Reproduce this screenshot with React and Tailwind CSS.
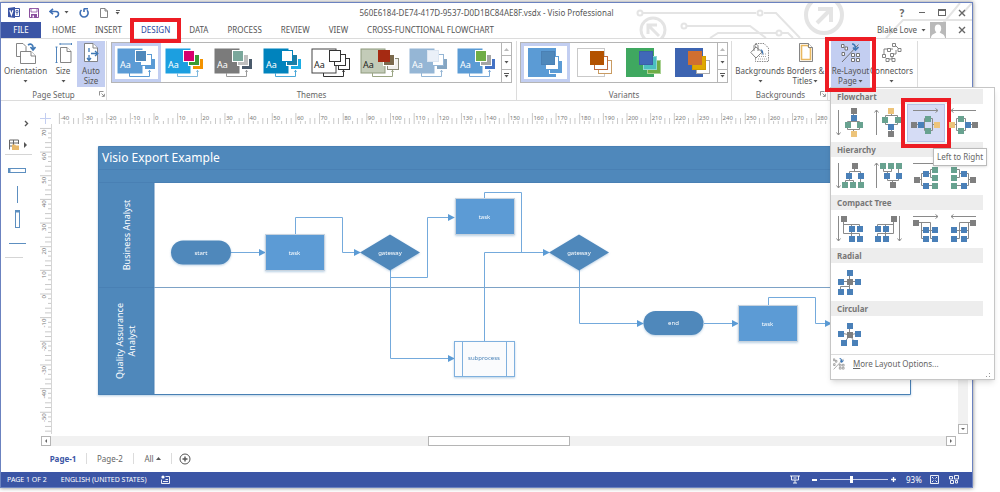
import { useState } from 'react';

const TABS = ['HOME', 'INSERT', 'DESIGN', 'DATA', 'PROCESS', 'REVIEW', 'VIEW', 'CROSS-FUNCTIONAL FLOWCHART'];

const THEMES = [
  { name: 'Office', main: '#5b9bd5', text: '#fff', line: '#5b9bd5', cards: ['#4f88bb', '#ffffff', '#5b9bd5'], edges: ['#fff', '#5b9bd5', '#fff'] },
  { name: 'Integral', main: '#1c9fe0', text: '#fff', line: '#7fb9de', cards: ['#d6006d', '#3a9b35', '#f39200'], edges: ['#fff', '#fff', '#fff'] },
  { name: 'Slate', main: '#7b7b7b', text: '#fff', line: '#9a9a9a', cards: ['#7aa79b', '#bfbfbf', '#4a5a6b'], edges: ['#fff', '#fff', '#fff'] },
  { name: 'Ion', main: '#0083bd', text: '#fff', line: '#4aa8d8', cards: ['#ffffff', '#1b7ea6', '#1cade4'], edges: ['#0083bd', '#fff', '#fff'] },
  { name: 'Outline', main: '#ffffff', text: '#222', line: '#333', stroke: '#444', cards: ['#ffffff', '#ffffff', '#ffffff'], edges: ['#333', '#333', '#333'] },
  { name: 'Retrospect', main: '#c3cbb8', text: '#222', line: '#9aa583', stroke: '#8e9a7c', cards: ['#a52a12', '#7b6a4d', '#f2f2ee'], edges: ['#a52a12', '#fff', '#8a8a78'] },
  { name: 'Pale', main: '#95b6d5', text: '#fff', line: '#95b6d5', cards: ['#eaf0f8', '#ffffff', '#86a6c2'], edges: ['#dbe5f1', '#95b6d5', '#fff'] },
  { name: 'Facet', main: '#5b9bd5', text: '#fff', line: '#7aa9d8', cards: ['#70ad47', '#a5a5a5', '#4472c4'], edges: ['#fff', '#fff', '#fff'] },
];

const VARIANTS = [
  { name: 'Variant 1', main: '#5b9bd5', cards: ['#4f88bb', '#ffffff', '#5b9bd5'], edges: ['#4a80b4', '#5b9bd5', '#fff'] },
  { name: 'Variant 2', main: '#ffffff', stroke: '#c9c9c9', cards: ['#b35200', '#ffffff', '#ffffff'], edges: ['#b35200', '#bd6b40', '#c99b62'] },
  { name: 'Variant 3', main: '#3fa860', cards: ['#4068b8', '#4bbfbf', '#70ad47'], edges: ['#3a5fa8', '#8fd6d0', '#a9d193'] },
  { name: 'Variant 4', main: '#3d64b1', cards: ['#d06f30', '#e0a800', '#ffffff'], edges: ['#d06f30', '#d09c00', '#aaa'] },
];

const GRAY = '#7f7f7f';
const BLUE = '#4a80b8';
const GREEN = '#68a290';
const YELLOW = '#edc47a';

// Each layout: connector path, arrow direction and [x, y, color] boxes
const SECTIONS = [
  {
    title: 'Flowchart',
    items: [
      { label: 'Top to Bottom', arrow: 'down', line: 'M22.5 7V18M16.5 21V17.5H28.5V21M16.5 21V25.5H28.5V21M22.5 26V30', boxes: [[23, 7, GRAY], [23, 14, BLUE], [17, 21, GREEN], [29, 21, GREEN], [23, 30, YELLOW]] },
      { label: 'Bottom to Top', arrow: 'up', line: 'M22.5 7V11.5M16.5 16V11.5H28.5V16M16.5 16V20.5H28.5V16M22.5 20V30', boxes: [[22, 7, YELLOW], [16, 16, GREEN], [29, 16, GREEN], [22, 23, BLUE], [22, 30, GRAY]] },
      { label: 'Left to Right', arrow: 'right', line: 'M7 20.5H14M21 14.5H17.5V26.5H21M21 14.5H25.5V26.5H21M26 20.5H30', boxes: [[7, 21, GRAY], [14, 21, BLUE], [21, 15, GREEN], [21, 27, GREEN], [30, 21, YELLOW]] },
      { label: 'Right to Left', arrow: 'left', line: 'M7 20.5H11M16 14.5H11.5V26.5H16M16 14.5H20.5V26.5H16M20 20.5H30', boxes: [[7, 21, YELLOW], [16, 15, GREEN], [16, 27, GREEN], [23, 21, BLUE], [30, 21, GRAY]] },
    ],
  },
  {
    title: 'Hierarchy',
    items: [
      { label: 'Hierarchy Top to Bottom', arrow: 'down', line: 'M23.5 9V14M18.5 19V14.5H29.5V28M18.5 19V24M14.5 28V23.5H22.5V28', boxes: [[24, 9, GRAY], [18, 19, BLUE], [30, 19, BLUE], [14, 28, GREEN], [22, 28, GREEN], [30, 28, GREEN]] },
      { label: 'Hierarchy Bottom to Top', arrow: 'up', line: 'M14.5 9V14.5H22.5V9M18.5 14V19M29.5 9V19M18.5 19V23.5H29.5V19M23.5 23V28', boxes: [[14, 9, GREEN], [22, 9, GREEN], [30, 9, GREEN], [18, 19, BLUE], [30, 19, BLUE], [24, 28, GRAY]] },
      { label: 'Hierarchy Left to Right', arrow: 'right', line: 'M10 22.5H14M19 16.5H14.5V28.5H28M19 16.5H24M28 12.5H23.5V20.5H28', boxes: [[10, 23, GRAY], [19, 17, BLUE], [19, 29, BLUE], [28, 13, GREEN], [28, 21, GREEN], [28, 29, GREEN]] },
      { label: 'Hierarchy Right to Left', arrow: 'left', line: 'M28 22.5H24M19 16.5H23.5V28.5H9M19 16.5H14M9 12.5H14.5V20.5H9', boxes: [[28, 23, GRAY], [19, 17, BLUE], [19, 29, BLUE], [9, 13, GREEN], [9, 21, GREEN], [9, 29, GREEN]] },
    ],
  },
  {
    title: 'Compact Tree',
    items: [
      { label: 'Down then Right', arrow: 'down', line: 'M12.5 9V23.5H28.5V29M12.5 14.5H28.5V19M20.5 14V29', boxes: [[13, 9, GRAY], [21, 19, BLUE], [29, 19, BLUE], [21, 29, BLUE], [29, 29, BLUE]] },
      { label: 'Down then Left', arrow: 'downRight', line: 'M24.5 9V23.5H8.5V29M24.5 14.5H8.5V19M16.5 14V29', boxes: [[25, 9, GRAY], [9, 19, BLUE], [17, 19, BLUE], [9, 29, BLUE], [17, 29, BLUE]] },
      { label: 'Right then Down', arrow: 'right', line: 'M9 12.5H23.5V28.5H28M14.5 13V28.5H19M14 20.5H28', boxes: [[9, 13, GRAY], [19, 20, BLUE], [28, 20, BLUE], [19, 29, BLUE], [28, 29, BLUE]] },
      { label: 'Left then Down', arrow: 'left', line: 'M28 12.5H14.5V28.5H9M23.5 13V28.5H19M23 20.5H9', boxes: [[28, 13, GRAY], [9, 20, BLUE], [19, 20, BLUE], [9, 29, BLUE], [19, 29, BLUE]] },
    ],
  },
  {
    title: 'Radial',
    items: [
      { label: 'Radial', line: 'M18.5 10V24M10 18.5H27M9.5 29V23.5H18.5V29', boxes: [[19, 10, BLUE], [10, 19, BLUE], [27, 19, BLUE], [10, 29, BLUE], [19, 29, BLUE], [19, 19, GRAY]] },
    ],
  },
  {
    title: 'Circular',
    items: [
      { label: 'Circular', line: 'M18.5 10V19M19 19L10 17M19 19L27 17M19 19L13 27M19 19L24 27', boxes: [[19, 10, BLUE], [10, 18, BLUE], [27, 18, BLUE], [13, 27, BLUE], [24, 27, BLUE], [19, 19, GRAY]] },
    ],
  },
];

const ARROWS = {
  down: 'M7.5 6V31M5.5 28.5L7.5 31L9.5 28.5',
  up: 'M7.5 31V6M5.5 8.5L7.5 6L9.5 8.5',
  right: 'M6 6.5H31M28.5 4.5L31 6.5L28.5 8.5',
  left: 'M31 6.5H6M8.5 4.5L6 6.5L8.5 8.5',
  downRight: 'M30.5 6V31M28.5 28.5L30.5 31L32.5 28.5',
};

const Caret = ({ up = false }) => (
  <svg width="5" height="3" viewBox="0 0 5 3" className="inline-block shrink-0" aria-hidden="true">
    <path d={up ? 'M0 3L2.5 0L5 3Z' : 'M0.5 0H4.5L2.5 2.5Z'} fill="#555" />
  </svg>
);

const Launcher = () => (
  <button type="button" aria-label="Open dialog" className="absolute right-0 top-1">
    <svg width="6" height="6" viewBox="0 0 6 6" fill="none" stroke="#777" strokeWidth="0.8">
      <path d="M0.5 4.5V0.5H4.5M2.5 2.5L5 5M5.4 2.8V5.4H2.8" />
    </svg>
  </button>
);

const ThemeThumb = ({ theme }) => (
  <svg width="41" height="32" viewBox="-1 -1 41 32" aria-hidden="true">
    <rect x="1" y="1" width="24" height="24" fill={theme.main} stroke={theme.stroke || theme.main} />
    <text x="3" y="20" fontSize="9" fill={theme.text}>Aa</text>
    <path d="M12.5 25V28.5H32.5V22" fill="none" stroke={theme.line} />
    <path d="M31 24L32.5 21.5L34 24Z" fill={theme.line} />
    <rect x="27.5" y="10.5" width="11" height="11" fill={theme.cards[2]} stroke={theme.edges[2]} />
    <rect x="23.5" y="6.5" width="11" height="11" fill={theme.cards[1]} stroke={theme.edges[1]} />
    <rect x="18.5" y="2.5" width="11" height="11" fill={theme.cards[0]} stroke={theme.edges[0]} />
  </svg>
);

const VariantThumb = ({ theme }) => (
  <svg width="38" height="32" viewBox="0 0 38 32" aria-hidden="true">
    <rect x="1.5" y="1.5" width="27" height="28" fill={theme.main} stroke={theme.stroke || theme.main} />
    <rect x="22.5" y="13.5" width="13" height="13" fill={theme.cards[2]} stroke={theme.edges[2]} />
    <rect x="18.5" y="9.5" width="13" height="13" fill={theme.cards[1]} stroke={theme.edges[1]} />
    <rect x="14.5" y="4.5" width="13" height="13" fill={theme.cards[0]} stroke={theme.edges[0]} />
  </svg>
);

const Gallery = ({ items, Thumb, className }) => {
  const [active, setActive] = useState(0);

  return (
    <div className={`mt-px flex h-[41px] border border-[#b5b5b5] bg-white ${className}`}>
      {items.map((item, i) => (
        <button
          key={item.name}
          type="button"
          aria-label={item.name}
          onClick={() => setActive(i)}
          className={`flex min-w-0 flex-1 items-center justify-center border-[3px] ${i === active ? 'border-[#c2cef1]' : 'border-transparent'}`}
        >
          <Thumb theme={item} />
        </button>
      ))}
      <div className="flex w-[10px] flex-col border-l border-[#b5b5b5]">
        <button type="button" aria-label="Row up" className="flex flex-1 items-center justify-center opacity-40"><Caret up /></button>
        <button type="button" aria-label="Row down" className="flex flex-1 items-center justify-center border-y border-[#b5b5b5]"><Caret /></button>
        <button type="button" aria-label="More" className="flex flex-1 flex-col items-center justify-center gap-px">
          <span className="h-px w-[5px] bg-[#555]" />
          <Caret />
        </button>
      </div>
    </div>
  );
};

const Group = ({ label, launcher = false, className, children }) => (
  <section className={`flex shrink-0 flex-col border-r border-[#dcdcdc] ${className}`}>
    <div className="flex h-[46px] shrink-0">{children}</div>
    <div className="relative flex flex-1 items-center justify-center pt-[2px] text-[#666]">
      {label}
      {launcher && <Launcher />}
    </div>
  </section>
);

const BigButton = ({ icon, lines, caret = 'below', active = false, className, ...props }) => (
  <button
    type="button"
    className={`flex h-[46px] flex-col items-center whitespace-nowrap ${active ? 'bg-[#c3cef1]' : ''} ${className}`}
    {...props}
  >
    <span className="flex h-6 items-start justify-center pt-[2px]">{icon}</span>
    <span className="leading-[11px]">{lines[0]}</span>
    <span className="flex h-[10px] items-center justify-center gap-px leading-[10px]">
      {lines[1]}
      {caret !== 'none' && <Caret />}
    </span>
  </button>
);

const OrientationIcon = () => (
  <svg width="20" height="21" viewBox="0 0 20 21" fill="#fff" stroke="#777" strokeWidth="0.9">
    <path d="M0.5 0.5H7L10 3.5V13.5H0.5Z" />
    <path d="M4.5 8.5H15L19.5 13V20.5H4.5Z" />
    <path d="M15 8.5V13H19.5" />
    <path d="M12 2C15 0 17.5 2 17 5.5M14.5 4L17 7L19.5 4" fill="none" stroke="#3f78b5" strokeWidth="1.6" />
  </svg>
);

const SizeIcon = () => (
  <svg width="17" height="20" viewBox="0 0 17 20" fill="#fff" stroke="#777" strokeWidth="0.9">
    <path d="M5.5 4.5H12L16 8.5V19.5H5.5Z" />
    <path d="M12 4.5V8.5H16" />
    <path d="M5 1H16.5M5 0V2M16.5 0V2M1.5 4V19.5M0.5 4H2.5M0.5 19.5H2.5" stroke="#3f78b5" />
  </svg>
);

const AutoSizeIcon = () => (
  <svg width="15" height="20" viewBox="0 0 15 20" fill="#fff" stroke="#777" strokeWidth="0.9">
    <path d="M0.5 0.5H9L13.5 5V18.5H0.5Z" />
    <path d="M9 0.5V5H13.5" />
    <path d="M5 5V9M5 12V17M3 15L5 17.5L7 15M7 10.5H13M11 8L13.8 10.5L11 13" fill="none" stroke="#3f78b5" strokeWidth="1.3" />
  </svg>
);

const BackgroundsIcon = () => (
  <svg width="20" height="20" viewBox="0 0 20 20" fill="#fff" stroke="#777" strokeWidth="0.9">
    <path d="M5.5 0.5H14L18.5 5V18.5H5.5Z" strokeDasharray="1.4 1" />
    <path d="M8 16H17M9 13.5H17M11 11H17" stroke="#999" strokeDasharray="1 1" />
    <path d="M6 4L12 9L6 15L0.8 9.5Z" />
    <path d="M4 8V3C4 1 8 1 8 3V8" fill="none" />
    <path d="M10.5 6C13.5 7 13.5 9.5 13 12.5L11.5 8.5Z" fill="#3f78b5" stroke="none" />
  </svg>
);

const BordersIcon = () => (
  <svg width="14" height="20" viewBox="0 0 14 20" fill="#fff" stroke="#777" strokeWidth="0.9">
    <path d="M0.5 0.5H9.5L13.5 4.5V18.5H0.5Z" />
    <path d="M2.5 2.5H8.5L11.5 5.5V16.5H2.5Z" stroke="#e9b85f" strokeWidth="1.6" />
    <path d="M9.5 0.5V4.5H13.5" />
  </svg>
);

const RelayoutIcon = ({ className = 'h-5 w-5' }) => (
  <svg viewBox="0 0 20 20" className={className} fill="#fff" stroke="#666" strokeWidth="0.9">
    <path d="M0.5 1.5H3V4.5H0.5ZM4 4H6.5V7H4ZM1 9.5H3.5V12.5H1Z" />
    <path d="M1 19L17.5 1.5" fill="none" />
    <path d="M10.5 10.5H13.5V13.5H10.5ZM15.5 10.5H18.5V13.5H15.5ZM10.5 15.5H13.5V18.5H10.5ZM15.5 15.5H18.5V18.5H15.5Z" />
    <path d="M11 1C14 1 14.5 3.5 14.5 6M12 4.5L14.5 7L17.5 4" fill="none" stroke="#3f78b5" strokeWidth="1.7" />
  </svg>
);

const ConnectorsIcon = () => (
  <svg width="20" height="20" viewBox="0 0 20 20" fill="#fff" stroke="#777" strokeWidth="0.9">
    <path d="M2 12V6H11M13 2L17 6M9 11H14V7M5 16H10V13" fill="none" />
    <path d="M10.5 0.5H13.5V3.5H10.5ZM5.5 5.5H8.5V8.5H5.5ZM16 5.5H19V8.5H16ZM0.5 11.5H3.5V14.5H0.5ZM8.5 10.5H11.5V13.5H8.5ZM4 15.5H7V18.5H4ZM10 15.5H13V18.5H10Z" />
  </svg>
);

const LayoutIcon = ({ item }) => (
  <svg width="38" height="38" viewBox="0 0 38 38" aria-hidden="true">
    <g fill="none" stroke="#8a8a8a" strokeWidth="1">
      {item.arrow && <path d={ARROWS[item.arrow]} />}
      <path d={item.line} />
    </g>
    {item.boxes.map(([x, y, color]) => (
      <rect key={`${x}-${y}`} x={x - 3} y={y - 3} width="6" height="6" fill={color} />
    ))}
  </svg>
);

const LayoutMenu = () => (
  <div className="absolute -left-px top-[46px] z-20 w-[165px] border border-[#c6c6c6] bg-white pt-px text-left shadow-md">
    {SECTIONS.map((section) => (
      <div key={section.title} className="w-[152px]">
        <h3 className="h-[15px] bg-[#ededed] pl-[6px] font-bold leading-[15px] text-[#777]">{section.title}</h3>
        <div className="flex">
          {section.items.map((item) => {
            const hovered = item.label === 'Left to Right';
            return (
              <div key={item.label} className="relative">
                <button
                  type="button"
                  aria-label={item.label}
                  className={`block ${hovered ? 'bg-[#d5dcf5] outline outline-[#b5c2e8] -outline-offset-1' : ''}`}
                >
                  <LayoutIcon item={item} />
                </button>
                {hovered && (
                  <>
                    <span className="pointer-events-none absolute -inset-[6px] border-4 border-[#ed1c24]" />
                    <span className="absolute left-[26px] top-[44px] z-10 whitespace-nowrap border border-[#bbb] bg-white px-[3px] leading-4 text-[#666] shadow-sm">
                      Left to Right
                    </span>
                  </>
                )}
              </div>
            );
          })}
        </div>
      </div>
    ))}
    <div className="relative border-t border-[#dcdcdc] pb-[7px]">
      <button type="button" className="flex h-[17px] items-center gap-2 pl-[2px] text-[#666]">
        <RelayoutIcon className="h-3 w-3" />
        <span><u>M</u>ore Layout Options...</span>
      </button>
      <svg width="5" height="5" viewBox="0 0 5 5" className="absolute bottom-px right-[3px]" fill="#999">
        <path d="M3 0H4V1H3ZM3 3H4V4H3ZM0 3H1V4H0Z" />
      </svg>
    </div>
  </div>
);

const Circuit = () => (
  <svg className="pointer-events-none absolute right-0 top-0 h-[35px] w-[340px]" viewBox="632 3 340 35" fill="none" stroke="#e4e4e4" strokeWidth="2">
    <circle cx="640" cy="13" r="2.5" />
    <path d="M643 13H756M764 13H776L800 38" />
    <circle cx="760" cy="13" r="2.5" />
    <circle cx="653" cy="30" r="12" strokeWidth="3" />
    <path d="M659 36L648 25M648 34V25H657" strokeWidth="3" />
    <circle cx="684" cy="26" r="2.5" />
    <path d="M687 26H750L766 38M710 38L718 33H776" />
    <circle cx="779" cy="33" r="2.5" />
    <path d="M782 33H788L793 38" />
    <circle cx="824" cy="15" r="18" strokeWidth="4" />
    <path d="M817 23L831 9M818 9H831V22" strokeWidth="4" />
    <path d="M886 38L903 20H972M940 27L960 3M962 14L972 3" />
  </svg>
);

const TitleBar = () => (
  <div className="relative flex h-[19px] items-center justify-between pl-[7px] pr-[6px]">
    <div className="flex items-center text-[#666]">
      <svg width="12" height="11" viewBox="0 0 12 11" className="mr-[9px]" role="img" aria-label="Visio">
        <path d="M6 1.5H11.5V9.5H6" fill="#fff" stroke="#3b55a5" />
        <path d="M8 3.5H10V5.5H8ZM8 7H10" fill="none" stroke="#3b55a5" strokeWidth="0.8" />
        <path d="M0 1L7 0V11L0 10Z" fill="#3b55a5" />
        <path d="M1.8 3.2L3.4 7.8L5 3.2" fill="none" stroke="#fff" strokeWidth="1.2" />
      </svg>
      <button type="button" aria-label="Save" className="mr-[10px]">
        <svg width="10" height="10" viewBox="0 0 10 10">
          <path d="M0.5 0.5H9.5V9.5H0.5Z" fill="#fff" stroke="#8a4f9e" />
          <path d="M2 0.5H8V4H2Z" fill="#fff" stroke="#8a4f9e" strokeWidth="0.8" />
          <path d="M2 6H8V10H2Z" fill="#8a4f9e" />
          <path d="M3.5 7.5H5V9.5H3.5Z" fill="#fff" />
        </svg>
      </button>
      <button type="button" aria-label="Undo" className="mr-1">
        <svg width="11" height="10" viewBox="0 0 11 10" fill="none" stroke="#3f6fb5" strokeWidth="1.6">
          <path d="M4 0.8L1 3.5L4 6.2M1 3.5H7C10.5 3.5 10.5 9 6 9" />
        </svg>
      </button>
      <span className="mr-[10px] flex"><Caret /></span>
      <button type="button" aria-label="Redo" className="mr-[11px]">
        <svg width="10" height="10" viewBox="0 0 10 10" fill="none" stroke="#3f6fb5" strokeWidth="1.6">
          <path d="M2.5 2A4 4 0 1 0 8 2.2M5 0.5V4M5 0.8H9" />
        </svg>
      </button>
      <button type="button" aria-label="New" className="mr-[11px]">
        <svg width="8" height="10" viewBox="0 0 8 10" fill="#fff" stroke="#777" strokeWidth="0.9">
          <path d="M0.5 0.5H5L7.5 3V9.5H0.5ZM5 0.5V3H7.5" />
        </svg>
      </button>
      <button type="button" aria-label="Customize" className="-ml-[4px] flex flex-col items-center gap-px">
        <span className="h-px w-1 bg-[#666]" />
        <Caret />
      </button>
    </div>
    <h1 className="absolute inset-x-0 text-center text-[#555]">
      560E6184-DE74-417D-9537-D0D1BC84AE8F.vsdx - Visio Professional
    </h1>
    <div className="relative flex items-center gap-3 text-[#666]">
      <button type="button" className="w-2 text-[10px] font-bold leading-3">?</button>
      <button type="button" aria-label="Minimize" className="flex w-2 justify-center">
        <span className="h-px w-[6px] bg-[#666]" />
      </button>
      <button type="button" aria-label="Restore" className="h-[7px] w-2 border border-t-2 border-[#666]" />
      <button type="button" aria-label="Close"><CloseIcon /></button>
    </div>
  </div>
);

const CloseIcon = () => (
  <svg width="8" height="8" viewBox="0 0 8 8" className="block" fill="none" stroke="#666" strokeWidth="1.4">
    <path d="M1 1L7 7M7 1L1 7" />
  </svg>
);

const TabRow = () => (
  <nav className="relative flex h-4 items-stretch pr-[6px]">
    <button type="button" className="w-10 bg-[#3b55a5] pb-[2px] text-white">FILE</button>
    <div className="flex items-stretch gap-[19px] pl-[11px]">
      {TABS.map((tab) => (
        <button
          key={tab}
          type="button"
          className={`relative whitespace-nowrap pb-[2px] ${tab === 'DESIGN' ? 'text-[#2b48a0]' : 'text-[#555]'}`}
        >
          {tab}
          {tab === 'DESIGN' && (
            <span className="absolute -inset-x-[11px] -bottom-[5px] -top-1 z-10 border-4 border-[#ed1c24]" />
          )}
        </button>
      ))}
    </div>
    <div className="ml-auto flex items-center gap-1 text-[#555]">
      <span className="pb-px">Blake Love</span>
      <Caret />
      <svg width="16" height="16" viewBox="0 0 16 16" className="mr-2">
        <rect width="16" height="16" fill="#b9b9b9" />
        <ellipse cx="8" cy="6.5" rx="3.2" ry="4" fill="#fff" />
        <path d="M1 16C1 12 5 12 6.5 10H9.5C11 12 15 12 15 16Z" fill="#fff" />
      </svg>
      <button type="button" aria-label="Close document"><CloseIcon /></button>
    </div>
  </nav>
);

const Ribbon = () => {
  const [menuOpen, setMenuOpen] = useState(true);

  return (
    <div className="flex h-[63px] border-y border-[#dcdcdc] pl-px pt-[2px] text-[#555]">
      <Group label="Page Setup" launcher className="pr-px">
        <BigButton icon={<OrientationIcon />} lines={['Orientation']} className="w-[47px]" />
        <BigButton icon={<SizeIcon />} lines={['Size']} className="w-[28px]" />
        <BigButton icon={<AutoSizeIcon />} lines={['Auto', 'Size']} caret="none" active className="w-[28px]" />
      </Group>
      <Group label="Themes" className="px-[4px]">
        <Gallery items={THEMES} Thumb={ThemeThumb} className="w-[401px]" />
      </Group>
      <Group label="Variants" className="px-[3px]">
        <Gallery items={VARIANTS} Thumb={VariantThumb} className="w-[208px]" />
      </Group>
      <Group label="Backgrounds" launcher className="pl-[3px] pr-px">
        <BigButton icon={<BackgroundsIcon />} lines={['Backgrounds']} className="w-[50px]" />
        <BigButton icon={<BordersIcon />} lines={['Borders &', 'Titles']} className="w-[41px]" />
      </Group>
      <Group label="" className="pl-[3px] pr-[4px]">
        <div className="relative">
          <BigButton
            icon={<RelayoutIcon />}
            lines={['Re-Layout', 'Page']}
            active
            className="w-[39px]"
            aria-expanded={menuOpen}
            onClick={() => setMenuOpen(!menuOpen)}
          />
          <span className="pointer-events-none absolute -inset-x-[6px] -bottom-[5px] -top-[4px] z-30 border-4 border-[#ed1c24]" />
          {menuOpen && <LayoutMenu />}
        </div>
        <BigButton icon={<ConnectorsIcon />} lines={['Connectors']} className="w-[43px]" />
      </Group>
    </div>
  );
};

const STEP = 23.65;
const hMarks = Array.from({ length: 38 }, (_, i) => i - 4);
const vMarks = Array.from({ length: 13 }, (_, i) => 7 - i);

const HorizontalRuler = () => (
  <svg className="h-3 min-w-0 flex-1" aria-hidden="true">
    {hMarks.map((n) => {
      const x = 102 + n * STEP;
      return (
        <g key={n}>
          <path
            d={`M${x} 1V12M${x + 4.7} 9V12M${x + 9.4} 9V12M${x + 14.2} 6V12M${x + 18.9} 6V12`}
            stroke="#c9c9c9"
          />
          <text x={x + 1} y="8" fontSize="6" fill="#777">{n * 10}</text>
        </g>
      );
    })}
  </svg>
);

const VerticalRuler = () => (
  <svg className="w-3 shrink-0 border-r border-[#d5d5d5]" height="100%" aria-hidden="true">
    {vMarks.map((n) => {
      const y = 170 - n * STEP;
      return (
        <g key={n}>
          <path
            d={`M0 ${y}H11M8 ${y + 4.7}H11M8 ${y + 9.4}H11M5 ${y + 14.2}H11M5 ${y + 18.9}H11`}
            stroke="#c9c9c9"
          />
          <text textAnchor="end" fontSize="6" fill="#777" transform={`translate(6 ${y + 1}) rotate(-90)`}>{n * 10}</text>
        </g>
      );
    })}
  </svg>
);

const Task = ({ x, y }) => (
  <g>
    <rect x={x} y={y} width="59" height="36" fill="#5b9bd5" stroke="#c8d3de" />
    <text x={x + 29} y={y + 20} fill="#fff">task</text>
  </g>
);

const Terminal = ({ x, y, label }) => (
  <g>
    <rect x={x} y={y} width="60" height="24" rx="12" fill="#4f88bb" />
    <text x={x + 30} y={y + 14} fill="#fff">{label}</text>
  </g>
);

const Gateway = ({ x, y }) => (
  <g>
    <path d={`M${x - 30} ${y}L${x} ${y - 18}L${x + 30} ${y}L${x} ${y + 18}Z`} fill="#4f88bb" />
    <text x={x} y={y + 2} fill="#fff">gateway</text>
  </g>
);

const CONNECTORS = [
  'M231 252.5H260',
  'M295.5 234V217.5H342.5V252.5H355',
  'M390.5 270V277.5H427.5V217.5H449',
  'M390.5 270V358.5H449',
  'M484.5 199V192.5H521.5V252.5',
  'M484.5 341V252.5H544',
  'M579.5 270V323.5H638',
  'M704 323.5H733',
  'M768.5 305V297.5H815.5V323.5H826',
];

const Drawing = () => (
  <svg className="min-w-0 flex-1" height="100%" role="img" aria-label="Visio Export Example">
    <defs>
      <marker id="arrow" viewBox="0 0 6 6" refX="1" refY="3" markerWidth="7" markerHeight="7" orient="auto">
        <path d="M0 0L6 3L0 6Z" fill="#5b9bd5" />
      </marker>
      <filter id="shadow" x="-10%" y="-10%" width="120%" height="130%">
        <feDropShadow dx="0" dy="1" stdDeviation="1" floodColor="#4f88bb" floodOpacity="0.4" />
      </filter>
    </defs>
    <g transform="translate(-52 -124)">
      <g filter="url(#shadow)" stroke="#4a80b4">
        <path d="M98.5 182.5H910.5V394.5H98.5Z" fill="#fff" />
        <path d="M98.5 146.5H910.5V182.5H98.5Z" fill="#4f88bb" />
        <path d="M98.5 182.5H154V394.5H98.5Z" fill="#4f88bb" />
        <path d="M98.5 169.5H910.5M98.5 287.5H154" />
        <path d="M154 287.5H910.5" stroke="#7da2c6" />
      </g>
      <text x="102" y="162" fontSize="12" fill="#fff">Visio Export Example</text>
      <g fontSize="9" fill="#fff" textAnchor="middle">
        <text transform="translate(130 235) rotate(-90)">Business Analyst</text>
        <text transform="translate(123 341) rotate(-90)">Quality Assurance</text>
        <text transform="translate(135 341) rotate(-90)">Analyst</text>
      </g>
      <g fill="none" stroke="#74aadc">
        {CONNECTORS.map((d) => (
          <path key={d} d={d} markerEnd={d.endsWith('V252.5') ? undefined : 'url(#arrow)'} />
        ))}
      </g>
      <g filter="url(#shadow)" fontSize="6" textAnchor="middle">
        <Terminal x={171} y={240.5} label="start" />
        <Task x={265.5} y={234.5} />
        <Gateway x={390} y={252.5} />
        <Task x={455.5} y={198.5} />
        <Gateway x={579} y={252.5} />
        <g stroke="#7fb0de">
          <rect x="454.5" y="341.5" width="60" height="35" fill="#fafbfd" />
          <path d="M462.5 341V377M506.5 341V377" />
        </g>
        <text x="484" y="360" fill="#4a83b8">subprocess</text>
        <Terminal x={643.5} y={311} label="end" />
        <Task x={738.5} y={305.5} />
      </g>
    </g>
  </svg>
);

const ShapesPane = () => (
  <aside className="flex w-[39px] shrink-0 flex-col pl-1 pt-[19px]">
    <svg width="5" height="7" viewBox="0 0 5 7" className="ml-[19px]" fill="none" stroke="#555" strokeWidth="1.4">
      <path d="M1 1L3.5 3.5L1 6" />
    </svg>
    <button type="button" aria-label="Stencils" className="ml-1 mt-3 flex items-center gap-1">
      <svg width="11" height="12" viewBox="0 0 11 12">
        <path d="M0.5 10.5V1H9.5V5M0.5 4H9.5M4.5 1V7M0.5 7H4" fill="none" stroke="#666" />
        <path d="M3 11V5.5H6L7 6.5H10V11Z" fill="#e9b96a" />
      </svg>
      <svg width="3" height="6" viewBox="0 0 3 6"><path d="M0 0L3 3L0 6Z" fill="#555" /></svg>
    </button>
    <hr className="mb-3 mt-[3px] w-[27px] border-[#d5d5d5]" />
    <svg width="24" height="78" viewBox="0 0 24 78" fill="#fff" stroke="#5d8fc0">
      <rect x="3.5" y="1.5" width="17" height="4" />
      <path d="M4.5 1V6" strokeWidth="2" />
      <path d="M12.5 19V36M4 76.5H21" />
      <rect x="10.5" y="43.5" width="4" height="17" />
      <path d="M10 44.5H15" strokeWidth="2" />
    </svg>
    <hr className="mt-[12px] w-[18px] border-[#d5d5d5]" />
  </aside>
);

const ScrollButton = ({ label, d }) => (
  <button type="button" aria-label={label} className="flex size-[10px] shrink-0 items-center justify-center border border-[#b5b5b5] bg-white">
    <svg width="4" height="4" viewBox="0 0 4 4"><path d={d} fill="#666" /></svg>
  </button>
);

const Workspace = () => (
  <div className="flex min-h-0 flex-1">
    <ShapesPane />
    <main className="flex min-w-0 flex-1 flex-col pr-1 pt-[11px]">
      <div className="flex pr-3">
        <svg width="12" height="12" viewBox="0 0 12 12" className="shrink-0" stroke="#c3cef1">
          <path d="M5.5 1V12M0 6.5H11" />
        </svg>
        <HorizontalRuler />
      </div>
      <div className="flex min-h-0 flex-1">
        <VerticalRuler />
        <Drawing />
        <div className="ml-[2px] flex w-[10px] shrink-0 flex-col justify-between bg-[#f1f1f1]">
          <ScrollButton label="Scroll up" d="M0 3L2 1L4 3Z" />
          <ScrollButton label="Scroll down" d="M0 1H4L2 3Z" />
        </div>
      </div>
      <div className="ml-px mr-3 mt-[2px] flex bg-[#f1f1f1]">
        <ScrollButton label="Scroll left" d="M3 0L1 2L3 4Z" />
        <div className="flex flex-1 justify-center">
          <div className="w-[142px] border border-[#b5b5b5] bg-white" />
        </div>
        <ScrollButton label="Scroll right" d="M1 0L3 2L1 4Z" />
      </div>
    </main>
  </div>
);

const PageTabs = () => (
  <div className="flex h-[26px] shrink-0 items-center pb-px pl-[39px] text-[#666]">
    <button type="button" className="w-[47px] border-r border-[#dcdcdc] font-bold text-[#3b55a5]">Page-1</button>
    <button type="button" className="w-[47px] border-r border-[#dcdcdc]">Page-2</button>
    <button type="button" className="flex w-[38px] items-center justify-center gap-[2px] border-r border-[#dcdcdc]">
      All <Caret up />
    </button>
    <button type="button" aria-label="Insert page" className="ml-[7px]">
      <svg width="12" height="12" viewBox="0 0 12 12" fill="none" stroke="#555">
        <circle cx="6" cy="6" r="5" />
        <path d="M3.5 6H8.5M6 3.5V8.5" strokeWidth="1.4" />
      </svg>
    </button>
  </div>
);

const StatusBar = () => (
  <footer className="flex h-[15px] shrink-0 items-center bg-[#3b55a5] pl-[6px] pr-[13px] text-white">
    <div className="flex items-center gap-[14px] text-[7px]">
      <span>PAGE 1 OF 2</span>
      <span>ENGLISH (UNITED STATES)</span>
      <svg width="9" height="9" viewBox="0 0 9 9" fill="none" stroke="#fff" strokeWidth="0.9">
        <circle cx="2" cy="2" r="1.6" fill="#fff" stroke="none" />
        <path d="M4.5 1.5H8.5V8.5H0.5V4.5M2 6.5H7M4.5 4.5H7" />
      </svg>
    </div>
    <div className="ml-auto flex items-center">
      <button type="button" aria-label="Presentation mode" className="mr-3">
        <svg width="10" height="9" viewBox="0 0 10 9" fill="none" stroke="#fff" strokeWidth="0.9">
          <path d="M0 1H10M1.5 1V5H8.5V1M5 5V8M3 8H7M3.5 3H6.5" />
        </svg>
      </button>
      <button type="button" aria-label="Zoom out" className="mr-[3px] h-[2px] w-[5px] bg-white" />
      <input
        type="range"
        aria-label="Zoom"
        defaultValue="46"
        className="h-[7px] w-[68px] appearance-none bg-transparent bg-[linear-gradient(#c5cdea,#c5cdea)] bg-[length:100%_1px] bg-center bg-no-repeat [&::-webkit-slider-thumb]:h-[7px] [&::-webkit-slider-thumb]:w-[3px] [&::-webkit-slider-thumb]:appearance-none [&::-webkit-slider-thumb]:bg-white"
      />
      <button type="button" aria-label="Zoom in" className="ml-[3px]">
        <svg width="5" height="5" viewBox="0 0 5 5" stroke="#fff" strokeWidth="1.4"><path d="M0 2.5H5M2.5 0V5" /></svg>
      </button>
      <span className="ml-[10px] w-[16px]">93%</span>
      <button type="button" aria-label="Fit page" className="ml-2">
        <svg width="9" height="9" viewBox="0 0 9 9" fill="none" stroke="#fff" strokeWidth="0.9">
          <path d="M0.5 0.5H8.5V8.5H0.5ZM2 2L3.5 3.5M7 2L5.5 3.5M2 7L3.5 5.5M7 7L5.5 5.5" />
        </svg>
      </button>
      <button type="button" aria-label="Switch windows" className="ml-[10px]">
        <svg width="10" height="9" viewBox="0 0 10 9" fill="none" stroke="#fff" strokeWidth="0.9">
          <path d="M0.5 1.5H3.5V4H0.5ZM5.5 0.5H9.5V4H5.5ZM1.5 5.5H4.5V8.5H1.5ZM6.5 5.5H8.5V8H6.5Z" />
        </svg>
      </button>
    </div>
  </footer>
);

export default function App() {
  return (
    <div className="flex h-screen min-h-[400px] flex-col overflow-hidden bg-white pb-1 pr-[27px] pt-[2px] font-['Noto_Sans','Open_Sans',sans-serif] text-[8px] leading-[11px]">
      <div className="flex min-h-0 flex-1 flex-col border border-[#6b82c0] bg-white shadow-[0_0_4px_rgba(0,0,0,0.5)]">
        <header className="relative shrink-0 bg-white">
          <Circuit />
          <TitleBar />
          <TabRow />
          <Ribbon />
        </header>
        <Workspace />
        <PageTabs />
        <StatusBar />
      </div>
    </div>
  );
}
